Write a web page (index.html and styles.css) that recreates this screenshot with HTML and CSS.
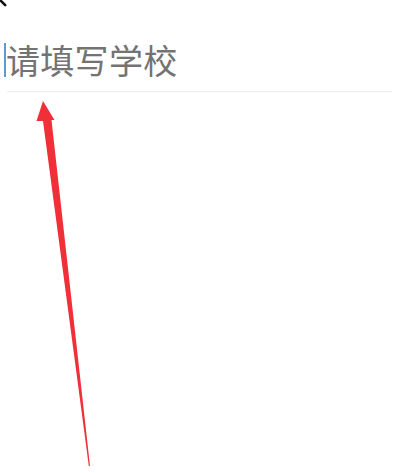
FILE: index.html
```html
<!DOCTYPE html>
<html lang="zh-CN">
<head>
<meta charset="utf-8">
<title>请填写学校</title>
<link rel="stylesheet" href="styles.css">
</head>
<body>
<div class="page">
  <header class="topbar">
    <svg class="back" width="12" height="10" viewBox="0 0 12 10" aria-hidden="true">
      <path d="M-2 -2 L5.2 5.2" stroke="#111" stroke-width="2.6" stroke-linecap="round" fill="none"/>
    </svg>
  </header>
  <div class="field">
    <span class="caret"></span>
    <span class="placeholder">请填写学校</span>
  </div>
  <svg class="annotation" width="401" height="473" viewBox="0 0 401 473" aria-hidden="true">
    <polygon points="43,101 54.5,120 51.5,120 90,466 88.8,466 43,121 36.5,121" fill="#ef3039"/>
  </svg>
</div>
</body>
</html>
```
FILE: styles.css
```css
html, body {
  margin: 0;
  padding: 0;
  background: #ffffff;
}
.page {
  position: relative;
  width: 401px;
  height: 473px;
  overflow: hidden;
  font-family: "Noto Sans CJK SC", "Noto Sans", sans-serif;
}
.topbar {
  height: 40px;
}
.back {
  display: block;
}
.field {
  display: flex;
  align-items: center;
  margin: 0 9px 0 7px;
  padding-bottom: 11px;
  border-bottom: 1px solid #ececec;
  height: 40px;
}
.caret {
  width: 2.5px;
  height: 34px;
  margin-left: -3.5px;
  margin-right: 0;
  background: #5a9ad6;
  flex: none;
}
.placeholder {
  font-size: 34px;
  line-height: 40px;
  color: #737373;
  letter-spacing: 0.3px;
}
.annotation {
  position: absolute;
  left: 0;
  top: 0;
  pointer-events: none;
}
```
